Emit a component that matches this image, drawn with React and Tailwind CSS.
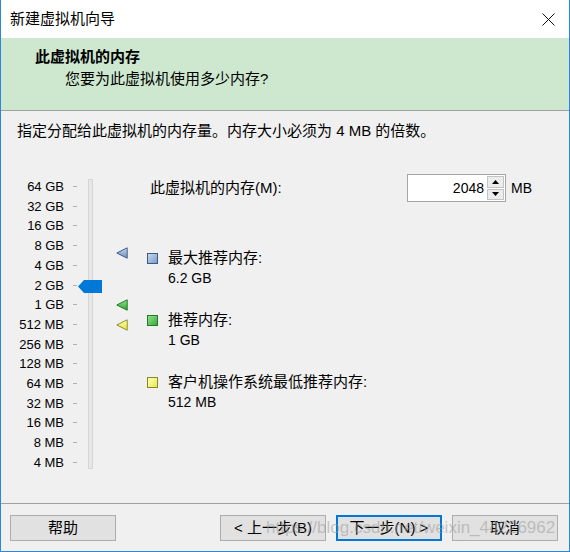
import React from "react";

const labels = ["64 GB","32 GB","16 GB","8 GB","4 GB","2 GB","1 GB","512 MB","256 MB","128 MB","64 MB","32 MB","16 MB","8 MB","4 MB"];

function Tri({ id, light, dark, stroke }) {
  return (
    <svg width="12" height="12" viewBox="0 0 12 12">
      <defs>
        <linearGradient id={id} x1="0" y1="0" x2="0" y2="1">
          <stop offset="0" stopColor={light} />
          <stop offset="1" stopColor={dark} />
        </linearGradient>
      </defs>
      <polygon points="0.8,6 11.2,0.8 11.2,11.2" fill={`url(#${id})`} stroke={stroke} strokeWidth="1" strokeLinejoin="round" />
    </svg>
  );
}

function Legend({ sq, label, value }) {
  return (
    <div className="flex">
      <div className={`mt-[5px] h-[11px] w-[11px] shrink-0 border ${sq}`} />
      <div className="ml-[10px] flex flex-col">
        <span className="text-[15px] leading-[20px]">{label}</span>
        <span className="text-[14px] leading-[20px]">{value}</span>
      </div>
    </div>
  );
}

export default function App() {
  return (
    <div className="relative flex h-[552px] w-[570px] flex-col overflow-hidden border-x border-b border-[#2b87d8] bg-[#f0f0f0] font-[family-name:'Liberation_Sans','Noto_Sans_CJK_SC',sans-serif] text-black">
      {/* title bar */}
      <div className="flex h-[38px] shrink-0 items-center justify-between bg-white pl-[9px] pr-[14px]">
        <span className="text-[15px] leading-[20px]">新建虚拟机向导</span>
        <svg width="13" height="13" viewBox="0 0 13 13">
          <path d="M0.5 0.5 L12.5 12.5 M12.5 0.5 L0.5 12.5" stroke="#111" strokeWidth="1" />
        </svg>
      </div>

      {/* header */}
      <div className="h-[73px] shrink-0 border-b border-[#a0a0a0] bg-[#cde8cf] pt-[9px]">
        <div className="pl-[34px] text-[15px] font-bold leading-[20px]">此虚拟机的内存</div>
        <div className="mt-[2px] pl-[64px] text-[15px] leading-[20px]">您要为此虚拟机使用多少内存?</div>
      </div>

      {/* body */}
      <div className="pl-[16px] pt-[10px] text-[15px] leading-[20px]">
        指定分配给此虚拟机的内存量。内存大小必须为 4 MB 的倍数。
      </div>

      <div className="mt-[33px] flex">
        {/* slider */}
        <div className="relative flex w-[146px] shrink-0 pt-[3px]">
          <div className="flex h-[295px] w-[76px] flex-col justify-between">
            {labels.map((l) => (
              <div key={l} className="flex h-[19px] items-center">
                <span className="w-[63px] text-right text-[13px] leading-[19px]">{l}</span>
                <span className="ml-[9px] h-px w-[4px] bg-[#b0b0b0]" />
              </div>
            ))}
          </div>
          <div className="ml-[11px] mt-[2px] h-[290px] w-[5px] border border-[#d6d6d6] bg-[#e7e7e7]" />

          <svg className="absolute left-[77px] top-[106px]" width="24" height="13" viewBox="0 0 24 13">
            <polygon points="0,6.5 6,0 24,0 24,13 6,13" fill="#0078d7" />
          </svg>
          <div className="absolute left-[115px] top-[73px]">
            <Tri id="tb" light="#c4d4ea" dark="#6e8fbd" stroke="#3f5f8e" />
          </div>
          <div className="absolute left-[115px] top-[125px]">
            <Tri id="tg" light="#8fe28f" dark="#2fa82f" stroke="#237a23" />
          </div>
          <div className="absolute left-[115px] top-[145px]">
            <Tri id="ty" light="#ffffa8" dark="#e4e43c" stroke="#8f8f2c" />
          </div>
        </div>

        {/* right column */}
        <div className="flex flex-1 flex-col">
          <div className="flex h-[28px] items-center">
            <span className="w-[260px] pl-[3px] text-[15px] leading-[20px]">此虚拟机的内存(M):</span>
            <div className="flex h-[28px] w-[99px] items-center border border-[#a6a6a6] bg-white">
              <span className="flex-1 pr-[3px] text-right text-[14px] leading-[20px]">2048</span>
              <div className="mr-[1px] flex h-[24px] w-[17px] flex-col gap-[1px]">
                <div className="flex flex-1 items-center justify-center border border-[#c4c4c4] bg-[#ececec]">
                  <svg width="7" height="4" viewBox="0 0 7 4"><polygon points="0,4 3.5,0 7,4" fill="#000" /></svg>
                </div>
                <div className="flex flex-1 items-center justify-center border border-[#c4c4c4] bg-[#ececec]">
                  <svg width="7" height="4" viewBox="0 0 7 4"><polygon points="0,0 7,0 3.5,4" fill="#000" /></svg>
                </div>
              </div>
            </div>
            <span className="ml-[5px] text-[14px] leading-[20px]">MB</span>
          </div>

          <div className="mt-[46px] flex flex-col gap-[22px]">
            <Legend sq="border-[#3b5a85] bg-linear-to-br from-[#c9d8ee] to-[#7d9cc8]" label="最大推荐内存:" value="6.2 GB" />
            <Legend sq="border-[#257a25] bg-linear-to-br from-[#8fe08f] to-[#35aa35]" label="推荐内存:" value="1 GB" />
            <Legend sq="border-[#86862a] bg-linear-to-br from-[#ffffb0] to-[#e8e84a]" label="客户机操作系统最低推荐内存:" value="512 MB" />
          </div>
        </div>
      </div>

      {/* footer */}
      <div className="mt-auto flex border-t border-[#a0a0a0] pb-[10px] pl-[9px] pr-[11px] pt-[11px]">
        <button className="h-[26px] w-[106px] border border-[#adadad] bg-[#e1e1e1] text-[15px] leading-[20px]">帮助</button>
        <div className="ml-auto flex gap-[10px]">
          <button className="h-[26px] w-[106px] border border-[#adadad] bg-[#e1e1e1] text-[15px] leading-[20px]">&lt; 上一步(B)</button>
          <button className="h-[26px] w-[106px] border-2 border-[#0078d7] bg-[#e1e1e1] text-[15px] leading-[20px]">下一步(N) &gt;</button>
          <button className="h-[26px] w-[106px] border border-[#adadad] bg-[#e1e1e1] text-[15px] leading-[20px]">取消</button>
        </div>
      </div>

      <div className="pointer-events-none absolute left-[265px] top-[518px] text-[17px] leading-[20px] text-[rgba(150,150,150,0.5)]">
        https://blog.csdn.net/weixin_44226962
      </div>
    </div>
  );
}
